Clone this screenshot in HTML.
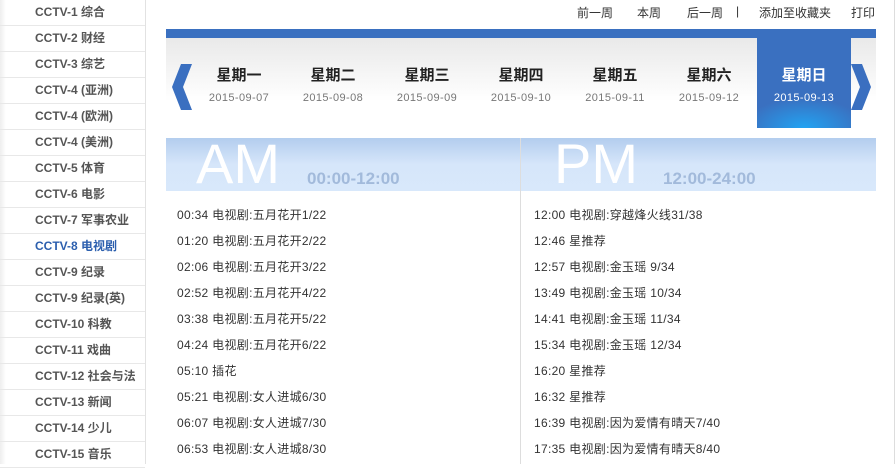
<!DOCTYPE html>
<html><head><meta charset="utf-8"><style>
*{margin:0;padding:0;box-sizing:border-box}
body{width:896px;height:464px;overflow:hidden;background:#fff;font-family:"Liberation Sans","Noto Sans CJK SC",sans-serif;position:relative}
.side{position:absolute;left:0;top:0;width:146px;height:464px;border-right:1px solid #e2e2e2;background:linear-gradient(to right,#eee 0,#fff 6px)}
.side div{height:26px;border-bottom:1px solid #e8e8e8;line-height:25px;padding-left:35px;font-size:12px;font-weight:bold;color:#555}
.side div.on{color:#2c5fae}
.rb{position:absolute;left:894px;top:0;width:1px;height:464px;background:#ddd}
.bar{position:absolute;left:166px;top:29px;width:710px;height:9px;background:#3a70c0}
.strip{position:absolute;left:166px;top:38px;width:710px;height:90px;background:linear-gradient(#e9e9e9,#fff 70%)}
.day{position:absolute;top:38px;width:94px;height:90px;text-align:center}
.day b{display:block;margin-top:26px;font-size:15px;color:#222}
.day i{display:block;font-style:normal;margin-top:7px;font-size:11px;letter-spacing:0.4px;color:#777}
.sel{background:radial-gradient(ellipse 60px 30px at 50% 100%,#22a3f2,#3a70c0);}
.sel b,.sel i{color:#fff}
.hd{position:absolute;top:138px;height:53px;background:linear-gradient(#b3cdee,#d6e6fa 50%,#d8e8fb)}
.big{position:absolute;top:-4px;font-size:56px;color:#fff;line-height:60px}
.tm{position:absolute;top:31px;font-size:17px;font-weight:bold;color:#a2badb}
.vl{position:absolute;left:520px;top:138px;width:1px;height:326px;background:#ddd}
.list{position:absolute;top:207px;font-size:12px;color:#333;letter-spacing:0.3px}
.list div{height:26px;line-height:16px;white-space:nowrap}
</style></head><body>
<div class="side">
<div>CCTV-1 综合</div><div>CCTV-2 财经</div><div>CCTV-3 综艺</div><div>CCTV-4 (亚洲)</div><div>CCTV-4 (欧洲)</div><div>CCTV-4 (美洲)</div><div>CCTV-5 体育</div><div>CCTV-6 电影</div><div>CCTV-7 军事农业</div><div class="on">CCTV-8 电视剧</div><div>CCTV-9 纪录</div><div>CCTV-9 纪录(英)</div><div>CCTV-10 科教</div><div>CCTV-11 戏曲</div><div>CCTV-12 社会与法</div><div>CCTV-13 新闻</div><div>CCTV-14 少儿</div><div>CCTV-15 音乐</div>
</div>
<div class="rb"></div>
<div style="position:absolute;top:4px;left:0;width:896px;font-size:12px;color:#333">
<span style="position:absolute;left:577px">前一周</span>
<span style="position:absolute;left:637px">本周</span>
<span style="position:absolute;left:687px">后一周</span>
<span style="position:absolute;left:736px">|</span>
<span style="position:absolute;left:759px">添加至收藏夹</span>
<span style="position:absolute;left:851px">打印</span>
</div>
<div class="bar"></div>
<div class="strip"></div>
<svg style="position:absolute;left:172px;top:64px" width="22" height="46"><polygon points="20,0 9,0 0,23 9,46 20,46 11,23" fill="#3a6fc0"/></svg>
<svg style="position:absolute;left:851px;top:64px" width="22" height="46"><polygon points="0,0 11,0 20,23 11,46 0,46 9,23" fill="#3a6fc0"/></svg>
<div class="day" style="left:192px"><b>星期一</b><i>2015-09-07</i></div>
<div class="day" style="left:286px"><b>星期二</b><i>2015-09-08</i></div>
<div class="day" style="left:380px"><b>星期三</b><i>2015-09-09</i></div>
<div class="day" style="left:474px"><b>星期四</b><i>2015-09-10</i></div>
<div class="day" style="left:568px"><b>星期五</b><i>2015-09-11</i></div>
<div class="day" style="left:662px"><b>星期六</b><i>2015-09-12</i></div>
<div class="day sel" style="left:757px"><b>星期日</b><i>2015-09-13</i></div>
<div class="hd" style="left:166px;width:354px"><span class="big" style="left:30px">AM</span><span class="tm" style="left:141px">00:00-12:00</span></div>
<div class="hd" style="left:521px;width:355px"><span class="big" style="left:33px">PM</span><span class="tm" style="left:142px">12:00-24:00</span></div>
<div class="vl"></div>
<div class="list" style="left:177px">
<div>00:34 电视剧:五月花开1/22</div><div>01:20 电视剧:五月花开2/22</div><div>02:06 电视剧:五月花开3/22</div><div>02:52 电视剧:五月花开4/22</div><div>03:38 电视剧:五月花开5/22</div><div>04:24 电视剧:五月花开6/22</div><div>05:10 插花</div><div>05:21 电视剧:女人进城6/30</div><div>06:07 电视剧:女人进城7/30</div><div>06:53 电视剧:女人进城8/30</div>
</div>
<div class="list" style="left:534px">
<div>12:00 电视剧:穿越烽火线31/38</div><div>12:46 星推荐</div><div>12:57 电视剧:金玉瑶 9/34</div><div>13:49 电视剧:金玉瑶 10/34</div><div>14:41 电视剧:金玉瑶 11/34</div><div>15:34 电视剧:金玉瑶 12/34</div><div>16:20 星推荐</div><div>16:32 星推荐</div><div>16:39 电视剧:因为爱情有晴天7/40</div><div>17:35 电视剧:因为爱情有晴天8/40</div>
</div>
</body></html>
